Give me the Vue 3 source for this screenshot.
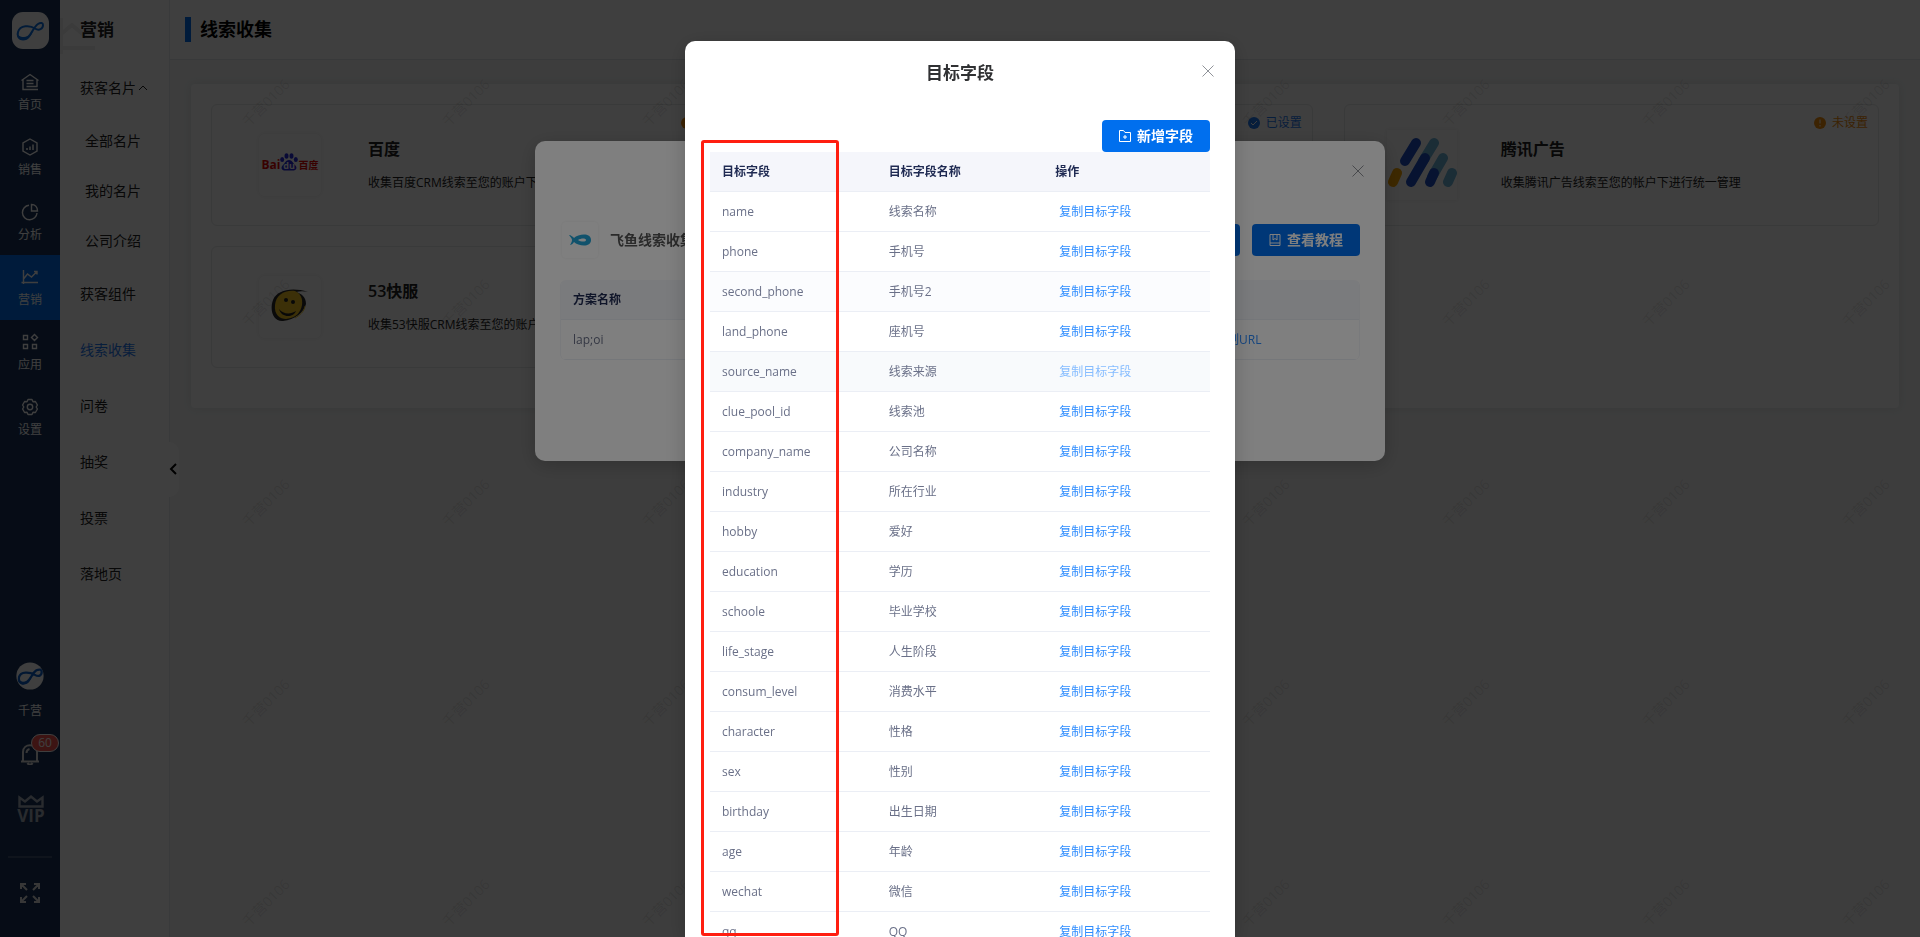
<script setup>
import { ref } from 'vue';

// Main navigation
const navItems = [
  { name: '首页', icon: 'home' },
  { name: '销售', icon: 'sale' },
  { name: '分析', icon: 'pie' },
  { name: '营销', icon: 'trend' },
  { name: '应用', icon: 'apps' },
  { name: '设置', icon: 'gear' }
];
const activeNav = ref('营销');

// Second level menu
const menuItems = [
  { name: '获客名片', open: true, children: ['全部名片', '我的名片', '公司介绍'] },
  { name: '获客组件' },
  { name: '线索收集' },
  { name: '问卷' },
  { name: '抽奖' },
  { name: '投票' },
  { name: '落地页' }
];
const activeMenu = ref('线索收集');

const cards = [
  { key: 'baidu', title: '百度', desc: '收集百度CRM线索至您的账户下', done: false },
  { key: 'feiyu', title: '', desc: '', done: true },
  { key: 'tencent', title: '腾讯广告', desc: '收集腾讯广告线索至您的帐户下进行统一管理', done: false },
  { key: 'kf', title: '53快服', desc: '收集53快服CRM线索至您的账户', done: null }
];

const fields = [
  { key: 'name', label: '线索名称' },
  { key: 'phone', label: '手机号' },
  { key: 'second_phone', label: '手机号2', state: 'fading' },
  { key: 'land_phone', label: '座机号' },
  { key: 'source_name', label: '线索来源', state: 'hovered' },
  { key: 'clue_pool_id', label: '线索池' },
  { key: 'company_name', label: '公司名称' },
  { key: 'industry', label: '所在行业' },
  { key: 'hobby', label: '爱好' },
  { key: 'education', label: '学历' },
  { key: 'schoole', label: '毕业学校' },
  { key: 'life_stage', label: '人生阶段' },
  { key: 'consum_level', label: '消费水平' },
  { key: 'character', label: '性格' },
  { key: 'sex', label: '性别' },
  { key: 'birthday', label: '出生日期' },
  { key: 'age', label: '年龄' },
  { key: 'wechat', label: '微信' },
  { key: 'qq', label: 'QQ' }
];

const copyField = (key) => {
  navigator.clipboard?.writeText(key);
};
</script>

<template>
  <div class="page">
    <!-- Dark navigation rail -->
    <nav class="rail">
      <a href="#" class="logo" aria-label="logo">
        <svg viewBox="0 0 37 37" width="37" height="37">
          <path d="M31 13c0 4-4 6-8 3.500C18 13 8 13 6 20c-1 4 1 7 5 7 8 0 9-11 15-15 3-2 5-1 5 1z" fill="none" stroke="#0b6fe0" stroke-width="2" />
          <path d="M5 20c-1 5 2 8.500 6 8.500 6 0 8-5 11-10.500-3 4-6 7-10 7-4 0-7-2-7-5z" fill="#0b6fe0" />
        </svg>
      </a>
      <a
        v-for="item in navItems"
        :key="item.name"
        href="#"
        class="nav-item"
        :class="{ active: item.name === activeNav }"
        @click.prevent="activeNav = item.name"
      >
        <svg class="nav-icon" viewBox="0 0 18 18" width="18" height="18">
          <g v-if="item.icon === 'home'">
            <path d="M17 16.500H2V6.500M.5 7.500 9 1.500l8.500 6M16 6.500v7" />
            <path d="M5.500 7.500h7M5.500 10.500h7M5.500 13.500h11" />
          </g>
          <g v-else-if="item.icon === 'sale'">
            <path d="M9 1l7 4v8l-7 4-7-4V5z" />
            <path d="M6 12v-2M9 12V8.500M12 12V6.500" stroke-width="1.500" />
          </g>
          <g v-else-if="item.icon === 'pie'">
            <path d="M8 2.200A7.300 7.300 0 1 0 16 10" />
            <path d="M10.500 1.500v6.500h6c0-4-2.500-6.500-6-6.500z" />
          </g>
          <g v-else-if="item.icon === 'trend'">
            <path d="M2.500 2v14M.500 14.500H17M2.500 11l4-5 4 3 5-5M13 3.500h3v3" />
          </g>
          <g v-else-if="item.icon === 'apps'">
            <path d="M2.500 2.500h4v4h-4zM2.500 11.500h4v4h-4zM11.500 11.500h4v4h-4zM13.500 1.500l3 3-3 3-3-3z" />
          </g>
          <g v-else>
            <path d="M7 1.500h4l1 2.200 2.400-.2 2 3.500L15.200 9l1.200 2-2 3.500-2.400-.2-1 2.200H7l-1-2.200-2.400.2-2-3.500L2.800 9 1.600 7l2-3.500 2.400.2z" stroke-linejoin="round" />
            <circle cx="9" cy="9" r="2.700" />
          </g>
        </svg>
        <span>{{ item.name }}</span>
      </a>

      <div class="rail-bottom">
        <svg class="avatar" viewBox="0 0 37 37" width="28" height="28">
          <circle cx="18.500" cy="18.500" r="18" fill="#fff" />
          <path d="M34 13c0 5-4 7-9 4C18 13 6 12 4 20c-1 5 1 8 5 8 10 0 11-13 18-17 4-2 7-1 7 2z" fill="none" stroke="#0b5fc8" stroke-width="3" />
          <path d="M3 20c-1 6 2 10 7 10 7 0 9-6 12-12-3 4-7 8-11 8-5 0-8-3-8-6z" fill="#0b5fc8" />
        </svg>
        <span class="account">千营</span>
        <button class="bell" type="button" aria-label="60">
          <svg viewBox="0 0 20 22" width="20" height="22">
            <path d="M3 18V9c0-9 14-9 14 0v9M1 18.500h18M7.500 20c1 2 4 2 5 0M6.500 10c0-2 1-3.500 3-4" />
          </svg>
          <span class="badge">60</span>
        </button>
        <div class="vip">
          <svg viewBox="0 0 26 14" width="26" height="14">
            <path d="M1.500 3.500v9h23v-9l-5.500 4-6-5-6 5z" />
          </svg>
          <span>VIP</span>
        </div>
        <hr />
        <button class="expand" type="button" aria-label="全屏">
          <svg viewBox="0 0 20 20" width="20" height="20">
            <path d="M1 6V1h5M1 1l6 6M14 1h5v5M19 1l-6 6M1 14v5h5M1 19l6-6M19 14v5h-5M19 19l-6-6" />
          </svg>
        </button>
      </div>
    </nav>

    <!-- Section menu -->
    <aside class="menu">
      <svg class="menu-mark" viewBox="0 0 38 36" width="38" height="36">
        <path d="M1 0v36M1 16 12 7l14 12M1 30h34" />
      </svg>
      <h2>营销</h2>
      <template v-for="item in menuItems" :key="item.name">
        <a
          href="#"
          class="menu-item"
          :class="{ active: item.name === activeMenu }"
          @click.prevent="activeMenu = item.name"
        >
          {{ item.name }}
          <svg v-if="item.open" viewBox="0 0 10 6" width="10" height="6">
            <path d="M1 5l4-4 4 4" />
          </svg>
        </a>
        <a v-for="child in item.children" :key="child" href="#" class="menu-item sub">{{ child }}</a>
      </template>
      <button class="collapse" type="button" aria-label="收起">
        <svg viewBox="0 0 8 12" width="8" height="12"><path d="M7 1 2 6l5 5" /></svg>
      </button>
    </aside>

    <!-- Content -->
    <main class="content">
      <header class="content-head">
        <h1>线索收集</h1>
      </header>
      <section class="panel">
        <article v-for="card in cards" :key="card.key" class="card">
          <div v-if="card.title" class="card-logo" :class="card.key">
            <div v-if="card.key === 'baidu'" class="baidu-logo">
              <b>Bai</b>
              <svg viewBox="0 0 18 18" width="18" height="18">
                <ellipse cx="6.500" cy="3" rx="2" ry="2.800" />
                <ellipse cx="11.500" cy="3" rx="2" ry="2.800" />
                <ellipse cx="2.200" cy="6.500" rx="2" ry="2.500" />
                <ellipse cx="15.800" cy="6.500" rx="2" ry="2.500" />
                <path d="M9 7c3 0 4 3 6 5 3 3 1 6-3 5.500H6C2 18 0 15 3 12c2-2 3-5 6-5z" />
                <text x="9" y="16">du</text>
              </svg>
              <b>百度</b>
            </div>
            <svg v-else-if="card.key === 'tencent'" viewBox="0 0 70 70" width="70" height="70" class="pills">
              <path d="M47 13 36 31M56 28 45 47M65 43l-4 9" stroke="#6db4d8" />
              <path d="M29 13 18 31M38 28 24 52M47 43l-4 9" stroke="#1d4fc4" />
              <path d="M10 43l-4 9" stroke="#f5a300" />
            </svg>
            <svg v-else viewBox="0 0 40 38" width="40" height="38">
              <path d="M38 4C22-1 7 2 3 12c-4 11 1 22 10 21 12-1 21-9 23-17 0-7-4-10-10-12 4-1 8-1 12 0z" fill="#2b2b2b" />
              <path d="M25 3C14 2 6 7 5 17s5 14 11 14c11-1 15-8 16-14 1-7-2-12-7-14z" fill="#f0c322" />
              <circle cx="16" cy="12" r="2" fill="#222" />
              <circle cx="23" cy="14" r="2" fill="#222" />
              <path d="M9 21c4 5 11 6 17 2-2 6-14 8-17-2z" fill="#222" />
              <path d="M35 18c-1 6-5 9-10 12" fill="none" stroke="#f0c322" stroke-width="1" />
            </svg>
          </div>
          <div v-if="card.title" class="card-text">
            <h3>{{ card.title }}</h3>
            <p>{{ card.desc }}</p>
          </div>
          <span v-if="card.done !== null" class="status" :class="{ done: card.done }">
            <svg viewBox="0 0 12 12" width="12" height="12">
              <circle cx="6" cy="6" r="6" fill="currentColor" />
              <path v-if="card.done" d="M3 6l2 2 4-4" />
              <path v-else d="M6 2.500v4M6 8v1.500" />
            </svg>
            {{ card.done ? '已设置' : '未设置' }}
          </span>
        </article>
      </section>
      <div class="watermarks" aria-hidden="true">
        <div v-for="n in 45" :key="n"><span>千营0106</span></div>
      </div>
    </main>

    <!-- Plan list dialog -->
    <div class="overlay centered">
      <section class="dialog plan-dialog">
        <button class="close" type="button" aria-label="关闭">
          <svg viewBox="0 0 12 12" width="12" height="12"><path d="M.5.5l11 11M11.500.5l-11 11" /></svg>
        </button>
        <div class="plan-bar">
          <div class="fish">
            <svg viewBox="0 0 22 12" width="22" height="12">
              <path d="M0 1c2 0 4 2 5 3 4-4 17-6 17 2s-13 6-17 2c-1 2-3 3-4 3 1-2 2-3 2-5S1 3 0 1z" fill="#22a5d8" />
              <path d="M9 6c3-2 8-2 8 0s-5 2-8 0z" fill="#fff" />
            </svg>
          </div>
          <h4>飞鱼线索收集</h4>
          <button class="btn" type="button" aria-label="新建方案"></button>
          <button class="btn" type="button">
            <svg viewBox="0 0 12 12" width="12" height="12">
              <path d="M1 .5h10v11H1zM1 9h10M4 .5V6l2-1.500L8 6V.5" />
            </svg>
            查看教程
          </button>
        </div>
        <div class="plan-frame">
          <table class="plan-table">
            <thead>
              <tr><th>方案名称</th><th class="action-col">操作</th></tr>
            </thead>
            <tbody>
              <tr><td>lap;oi</td><td><button class="link" type="button">复制URL</button></td></tr>
            </tbody>
          </table>
        </div>
      </section>
    </div>

    <!-- Target field dialog -->
    <div class="overlay">
      <section class="dialog field-dialog">
        <h2>目标字段</h2>
        <button class="close" type="button" aria-label="关闭">
          <svg viewBox="0 0 12 12" width="12" height="12"><path d="M.5.5l11 11M11.500.5l-11 11" /></svg>
        </button>
        <div class="toolbar">
          <button class="btn" type="button">
            <svg viewBox="0 0 12 12" width="12" height="12">
              <path d="M.5 11.500V.5h4L6 2.500h5.500v9zM6 5v4M4 7h4" />
            </svg>
            新增字段
          </button>
        </div>
        <table>
          <thead>
            <tr>
              <th>目标字段</th>
              <th>目标字段名称</th>
              <th>操作</th>
            </tr>
          </thead>
          <tbody>
            <tr v-for="field in fields" :key="field.key" :class="field.state">
              <td>{{ field.key }}</td>
              <td>{{ field.label }}</td>
              <td>
                <button class="link" type="button" @click="copyField(field.key)">复制目标字段</button>
              </td>
            </tr>
          </tbody>
        </table>
        <div class="highlight"></div>
      </section>
    </div>
  </div>
</template>

<style>
body {
  margin: 0;
  overflow: hidden;
}
</style>

<style scoped>
* {
  box-sizing: border-box;
}

.page {
  display: flex;
  height: 100vh;
  overflow: hidden;
  font-family: "Open Sans", "Noto Sans CJK SC", sans-serif;
  font-size: 12px;
  line-height: 20px;
  color: #222;
}

h1, h2, h3, h4, p {
  margin: 0;
}

a {
  color: inherit;
  text-decoration: none;
}

button {
  font: inherit;
  border: none;
  padding: 0;
  background: none;
  cursor: pointer;
}

svg {
  display: block;
  flex: none;
}

/* Rail */
.rail {
  display: flex;
  flex-direction: column;
  align-items: stretch;
  flex: none;
  width: 60px;
  background: #193358;
  color: #fff;
}

.logo {
  align-self: center;
  margin: 12px 0 11px;
  border-radius: 11px;
  background: #fff;
}

.nav-item {
  display: flex;
  flex-direction: column;
  align-items: center;
  gap: 4px;
  height: 65px;
  padding-top: 13px;
}

.nav-item.active {
  background: #006fee;
}

.nav-icon {
  fill: none;
  stroke: #fff;
  stroke-width: 1.4;
}

.rail-bottom {
  display: flex;
  flex-direction: column;
  align-items: center;
  margin-top: auto;
  padding-bottom: 34px;
}

.account {
  margin: 11px 0 22px;
}

.bell {
  position: relative;
}

.bell svg,
.expand svg {
  fill: none;
  stroke: #ddd;
  stroke-width: 2;
}

.badge {
  position: absolute;
  left: 11px;
  top: -9px;
  width: 28px;
  height: 18px;
  border: 1px solid #fff;
  border-radius: 9px;
  background: #f5504c;
  color: #fff;
  line-height: 16px;
}

.vip {
  display: flex;
  flex-direction: column;
  align-items: center;
  margin: 29px 0 32px 2px;
  color: #a4adbb;
  font-size: 17px;
  font-weight: 700;
  line-height: 16px;
}

.vip svg {
  fill: none;
  stroke: #a4adbb;
  stroke-width: 2.4;
}

hr {
  width: 44px;
  height: 2px;
  margin: 0 0 25px;
  border: none;
  background: #3e5070;
}

/* Section menu */
.menu {
  position: relative;
  flex: none;
  width: 110px;
  border-right: 1px solid #e6e9ec;
  background: #fff;
  font-size: 14px;
}

.menu h2 {
  position: relative;
  padding: 18px 20px;
  font-size: 17px;
  font-weight: 600;
  line-height: 24px;
}

.menu-mark {
  position: absolute;
  left: 0;
  top: 18px;
  fill: none;
  stroke: #ececec;
  stroke-width: 4;
}

.menu-item {
  display: flex;
  align-items: center;
  gap: 2px;
  height: 56px;
  padding-left: 20px;
}

.menu-item.sub {
  height: 50px;
  padding-left: 25px;
}

.menu-item.active {
  color: #1f78f0;
}

.menu-item svg {
  fill: none;
  stroke: #222;
}

.collapse {
  position: absolute;
  z-index: 1;
  left: 109px;
  top: calc(50% - 27px);
  width: 10px;
  height: 55px;
  border-radius: 0 10px 10px 0;
  background: #fff;
}

.collapse svg {
  fill: none;
  stroke: #000;
  stroke-width: 2;
}

/* Content */
.content {
  position: relative;
  flex: 1;
  min-width: 0;
  background: #f5f6f6;
}

.content-head {
  display: flex;
  align-items: center;
  height: 60px;
  padding-left: 15px;
  border-bottom: 1px solid #e0e4e8;
  background: #fff;
}

h1 {
  padding-left: 9px;
  border-left: 6px solid #006fee;
  color: #000;
  font-size: 18px;
  font-weight: 600;
  line-height: 25px;
}

.panel {
  display: grid;
  grid-template-columns: repeat(3, 1fr);
  gap: 20px 31px;
  margin: 24px 21px 0;
  padding: 20px 20px 40px;
  border-radius: 4px;
  background: #fdfdfd;
  box-shadow: 0 0 10px #dce2e2;
}

.card {
  position: relative;
  display: flex;
  align-items: center;
  height: 122px;
  padding-left: 47px;
  border: 1px solid #e6e8ea;
  border-radius: 6px;
}

.card-logo {
  display: grid;
  place-items: center;
  width: 62px;
  height: 62px;
  margin-right: 47px;
  border-radius: 6px;
  background: #fff;
  box-shadow: 0 0 4px #ececec;
}

.card-logo.tencent {
  width: 70px;
  height: 70px;
  margin: 0 44px 0 -5px;
  border-radius: 0;
}

.pills {
  fill: none;
  stroke-width: 10;
  stroke-linecap: round;
}

.baidu-logo {
  display: flex;
  align-items: center;
  color: #e10602;
  font-size: 10px;
}

.baidu-logo b:first-child {
  font-size: 12px;
}

.baidu-logo svg {
  margin-bottom: 6px;
  fill: #2529d8;
}

.baidu-logo text {
  fill: #fff;
  font-size: 9px;
  font-weight: 700;
  text-anchor: middle;
}

.card-text {
  white-space: nowrap;
}

.card h3 {
  margin-bottom: 12px;
  font-size: 16px;
  font-weight: 600;
  line-height: 24px;
}

.status {
  position: absolute;
  top: 8px;
  right: 10px;
  display: flex;
  align-items: center;
  gap: 6px;
  color: #f08c0a;
}

.status.done {
  color: #1f78f0;
}

.status path {
  fill: none;
  stroke: #fff;
}

.watermarks {
  position: absolute;
  inset: 3px 0 0 -4px;
  display: grid;
  grid-template-columns: repeat(9, 200px);
  grid-auto-rows: 200px;
  overflow: hidden;
  pointer-events: none;
  color: rgba(0, 0, 0, 0.1);
  font-size: 14px;
}

.watermarks div {
  display: grid;
  place-items: center;
}

.watermarks span {
  transform: rotate(-45deg);
}

/* Dialogs */
.overlay {
  position: fixed;
  z-index: 2;
  inset: 0;
  display: flex;
  flex-direction: column;
  align-items: center;
  padding-top: 41px;
  background: rgba(0, 0, 0, 0.5);
}

.overlay.centered {
  padding-top: 141px;
}

.dialog {
  position: relative;
  border-radius: 10px;
  background: #fff;
  box-shadow: 0 4px 20px rgba(0, 0, 0, 0.2);
}

.close {
  position: absolute;
  top: 24px;
  right: 21px;
}

.close svg {
  fill: none;
  stroke: #909399;
}

.plan-dialog {
  width: 850px;
  height: 320px;
  padding: 81px 25px 0;
}

.plan-bar {
  display: flex;
  align-items: center;
  gap: 12px;
  height: 36px;
  margin-bottom: 22px;
}

.fish {
  display: grid;
  place-items: center;
  width: 36px;
  height: 36px;
  margin-left: 2px;
  border-radius: 4px;
  box-shadow: 0 0 3px #eee;
}

.plan-bar h4 {
  margin-right: auto;
  color: #555;
  font-size: 14px;
  font-weight: 600;
}

.btn {
  display: flex;
  align-items: center;
  justify-content: center;
  gap: 6px;
  width: 108px;
  height: 32px;
  border-radius: 4px;
  background: #006fee;
  color: #fff;
  font-size: 14px;
  font-weight: 600;
}

.btn svg {
  fill: none;
  stroke: #fff;
}

table {
  width: 100%;
  border-collapse: separate;
  border-spacing: 0;
  table-layout: fixed;
}

th,
td {
  height: 40px;
  padding: 0 12px;
  border-bottom: 1px solid #ebeef5;
  text-align: left;
  color: #6a7088;
}

th {
  background: #f5f6fb;
  color: #1f2a52;
  font-weight: 600;
}

.plan-frame {
  overflow: hidden;
  border: 1px solid #f2f4f8;
  border-width: 0 1px;
  border-radius: 6px;
}

.action-col {
  width: 160px;
}

.link {
  padding: 0 4px;
  color: #2d8cff;
}

.field-dialog {
  flex: 1;
  min-height: 0;
  width: 550px;
  padding: 20px 25px 0;
  border-radius: 10px 10px 0 0;
  overflow: hidden;
}

.field-dialog h2 {
  color: #303133;
  font-size: 17px;
  font-weight: 600;
  line-height: 24px;
  text-align: center;
}

.toolbar {
  display: flex;
  justify-content: flex-end;
  margin-top: 35px;
}

.fading td {
  background: #fbfcfe;
}

.hovered td {
  background: #f8fafc;
}

.hovered .link {
  color: #85bcff;
}

/* Marks the key column */
.highlight {
  position: absolute;
  inset: 99px auto 1px 16px;
  width: 138px;
  border: 3px solid #ff1e10;
  border-radius: 3px;
  pointer-events: none;
}
</style>
